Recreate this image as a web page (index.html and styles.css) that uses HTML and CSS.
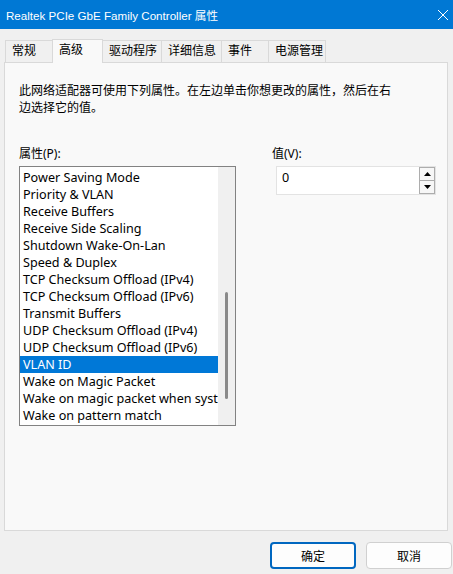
FILE: index.html
```html
<!DOCTYPE html>
<html lang="zh-CN">
<head>
    <meta charset="UTF-8">
    <title>Realtek PCIe GbE Family Controller 属性</title>
    <link rel="stylesheet" href="styles.css">
</head>
<body>
    <!-- Title bar -->
    <div class="titlebar">
        <span class="title">Realtek PCIe GbE Family Controller 属性</span>
        <svg class="close" width="12" height="12" viewBox="0 0 12 12">
            <path d="M1 1 L11 11 M11 1 L1 11" stroke="#ffffff" stroke-width="1"/>
        </svg>
    </div>

    <!-- Tabs -->
    <div class="tabs">
        <div class="tab">常规</div>
        <div class="tab active">高级</div>
        <div class="tab">驱动程序</div>
        <div class="tab">详细信息</div>
        <div class="tab">事件</div>
        <div class="tab">电源管理</div>
    </div>

    <!-- Panel -->
    <div class="panel">
        <p class="desc">此网络适配器可使用下列属性。在左边单击你想更改的属性，然后在右边选择它的值。</p>
        <div class="fields">
            <div class="prop-col">
                <div class="label">属性(P):</div>
                <div class="listbox">
                    <div class="items">
                        <div class="item">Power Saving Mode</div>
                        <div class="item">Priority &amp; VLAN</div>
                        <div class="item">Receive Buffers</div>
                        <div class="item">Receive Side Scaling</div>
                        <div class="item">Shutdown Wake-On-Lan</div>
                        <div class="item">Speed &amp; Duplex</div>
                        <div class="item">TCP Checksum Offload (IPv4)</div>
                        <div class="item">TCP Checksum Offload (IPv6)</div>
                        <div class="item">Transmit Buffers</div>
                        <div class="item">UDP Checksum Offload (IPv4)</div>
                        <div class="item">UDP Checksum Offload (IPv6)</div>
                        <div class="item selected">VLAN ID</div>
                        <div class="item">Wake on Magic Packet</div>
                        <div class="item">Wake on magic packet when syst</div>
                        <div class="item">Wake on pattern match</div>
                    </div>
                    <div class="scrollbar">
                        <div class="thumb"></div>
                    </div>
                </div>
            </div>
            <div class="value-col">
                <div class="label">值(V):</div>
                <div class="spinbox">
                    <div class="spin-value">0</div>
                    <div class="spin-buttons">
                        <div class="spin-btn">
                            <svg width="7" height="4" viewBox="0 0 7 4"><path d="M0 4 L3.5 0 L7 4 Z" fill="#000000"/></svg>
                        </div>
                        <div class="spin-btn">
                            <svg width="7" height="4" viewBox="0 0 7 4"><path d="M0 0 L7 0 L3.5 4 Z" fill="#000000"/></svg>
                        </div>
                    </div>
                </div>
            </div>
        </div>
    </div>

    <!-- Buttons -->
    <div class="footer">
        <button class="btn primary">确定</button>
        <button class="btn">取消</button>
    </div>
</body>
</html>
```

FILE: styles.css
```css
/* General Styles */
body {
    font-family: "Noto Sans", "Noto Sans CJK SC", sans-serif;
    font-size: 12px;
    color: #000000;
    background-color: #f0f0f0;
    margin: 0;
    padding: 0;
    width: 453px;
    height: 574px;
    overflow: hidden;
}
/* Title bar */
.titlebar {
    display: flex;
    justify-content: space-between;
    align-items: center;
    height: 29px;
    background-color: #0078d4;
    color: #ffffff;
    padding: 0 4px 0 6px;
}
.titlebar .title {
    font-family: "Liberation Sans", "Noto Sans CJK SC", sans-serif;
    font-size: 11.6px;
}
/* Tabs */
.tabs {
    display: flex;
    align-items: flex-end;
    height: 33px;
    padding-left: 5px;
}
.tab {
    box-sizing: border-box;
    height: 22px;
    line-height: 20px;
    padding-left: 6px;
    background-color: #f0f0f0;
    border: 1px solid #d9d9d9;
    border-bottom: none;
    margin-left: -1px;
}
.tab:nth-child(1) {
    margin-left: 0;
    width: 48px;
}
.tab:nth-child(2) {
    width: 51px;
}
.tab:nth-child(3) {
    width: 60px;
}
.tab:nth-child(4) {
    width: 61px;
}
.tab:nth-child(5) {
    width: 48px;
}
.tab:nth-child(6) {
    width: 58px;
}
.tab.active {
    height: 24px;
    line-height: 20px;
    background-color: #f9f9f9;
    position: relative;
    z-index: 1;
    margin-bottom: -1px;
}
/* Panel */
.panel {
    margin: 0 5px 0 4px;
    height: 469px;
    background-color: #f9f9f9;
    border: 1px solid #d9d9d9;
    box-sizing: border-box;
    padding: 0 14px;
}
.desc {
    margin: 19px 0 0;
    line-height: 17px;
    width: 380px;
}
.fields {
    display: flex;
    margin-top: 30px;
}
.label {
    height: 20px;
    line-height: 16px;
}
.prop-col {
    width: 253px;
    flex-shrink: 0;
}
.listbox {
    display: flex;
    width: 217px;
    height: 260px;
    border: 1px solid #828282;
    background-color: #ffffff;
    box-sizing: border-box;
}
.items {
    width: 198px;
    padding-top: 2px;
    overflow: hidden;
    font-size: 12.6px;
}
.item {
    height: 17px;
    line-height: 17px;
    padding-left: 3px;
    white-space: nowrap;
    overflow: hidden;
}
.item.selected {
    background-color: #0078d7;
    color: #ffffff;
}
.scrollbar {
    flex: 1;
    background-color: #f0f0f0;
    position: relative;
}
.thumb {
    position: absolute;
    left: 7px;
    top: 125px;
    width: 3px;
    height: 107px;
    background-color: #8a8a8a;
    border-radius: 2px;
}
/* Value spin box */
.value-col {
    padding-left: 4px;
}
.value-col .label {
    margin-left: -4px;
}
.spinbox {
    display: flex;
    width: 160px;
    height: 29px;
    border: 1px solid #e3e3e3;
    background-color: #ffffff;
    box-sizing: border-box;
}
.spin-value {
    flex: 1;
    padding-left: 5px;
    line-height: 21px;
    font-size: 12.6px;
}
.spin-buttons {
    display: flex;
    flex-direction: column;
    width: 16px;
}
.spin-btn {
    flex: 1;
    display: flex;
    align-items: center;
    justify-content: center;
    border: 1px solid #adadad;
    background-color: #f7f7f7;
}
.spin-btn + .spin-btn {
    border-top: none;
}
/* Footer buttons */
.footer {
    display: flex;
    justify-content: flex-end;
    gap: 10px;
    padding: 11px 1px 0 0;
}
.btn {
    font-family: "Noto Sans CJK SC", sans-serif;
    font-size: 12px;
    width: 86px;
    height: 27px;
    border: 1px solid #d0d0d0;
    border-radius: 4px;
    background-color: #fdfdfd;
    color: #000000;
    padding: 0;
}
.btn.primary {
    border: 2px solid #0067c0;
}
```
